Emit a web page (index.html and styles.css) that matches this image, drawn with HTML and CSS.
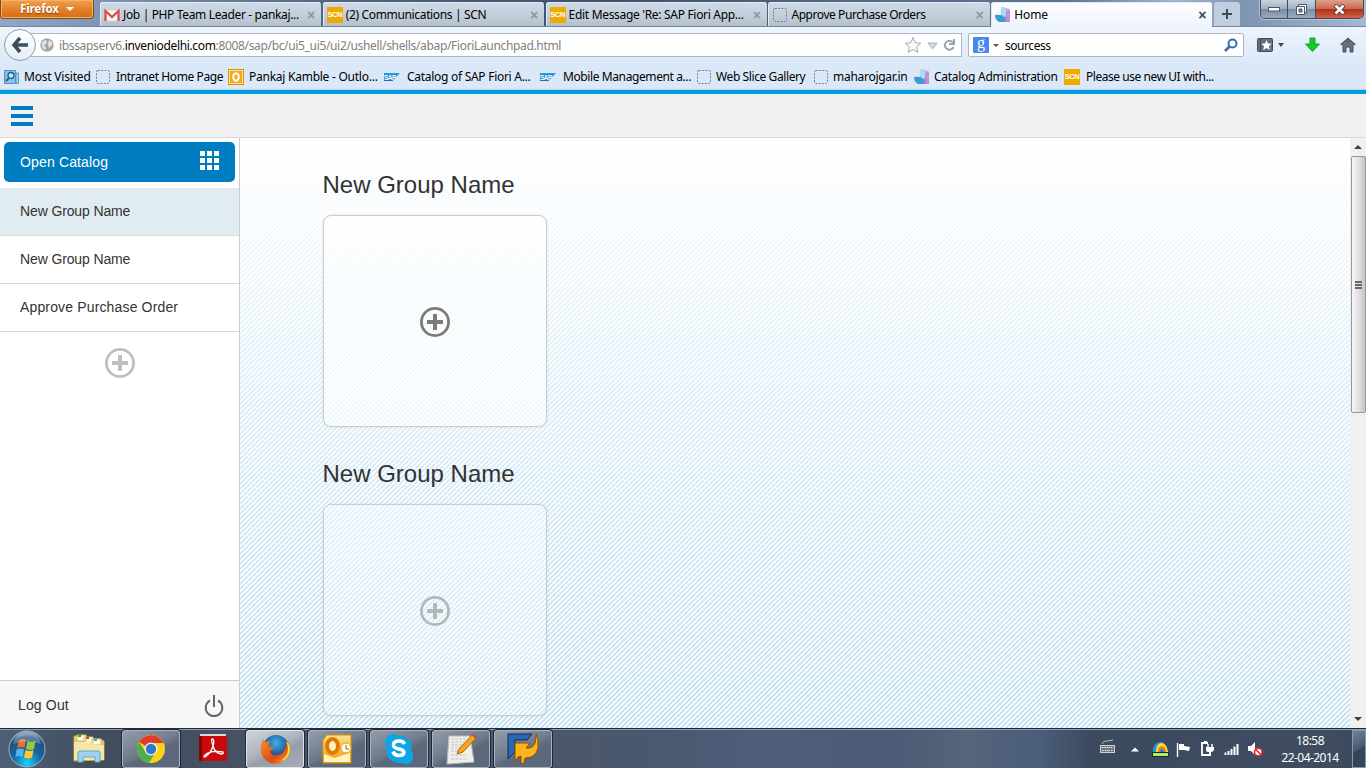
FILE: index.html
```html
<!DOCTYPE html>
<html lang="en">
<head>
<meta charset="utf-8">
<title>Home</title>
<link rel="stylesheet" href="styles.css">
</head>
<body>
<svg class="defs" width="0" height="0">
  <defs>
    <linearGradient id="petalA" x1="0" y1="1" x2="1" y2="0"><stop offset="0" stop-color="#3f8fd0"/><stop offset=".5" stop-color="#a58fd8"/><stop offset="1" stop-color="#e2c4ea"/></linearGradient>
    <linearGradient id="gold" x1="0" y1="0" x2="0" y2="1"><stop offset="0" stop-color="#ffe08a"/><stop offset="1" stop-color="#f0a000"/></linearGradient>
    <linearGradient id="sapBlue" x1="0" y1="0" x2="0" y2="1"><stop offset="0" stop-color="#19a5e0"/><stop offset="1" stop-color="#2464b4"/></linearGradient>
    <radialGradient id="orb" cx=".5" cy=".9" r=".9"><stop offset="0" stop-color="#19d4f8"/><stop offset=".45" stop-color="#1566a0"/><stop offset=".8" stop-color="#234f78"/><stop offset="1" stop-color="#a4bccb"/></radialGradient>
    <radialGradient id="globe" cx=".5" cy=".3" r=".7"><stop offset="0" stop-color="#3db2e8"/><stop offset="1" stop-color="#0b2a68"/></radialGradient>
    <linearGradient id="fox" x1="0" y1="0" x2="1" y2="1"><stop offset="0" stop-color="#f7931e"/><stop offset=".6" stop-color="#e0481a"/><stop offset="1" stop-color="#f8b020"/></linearGradient>
    <symbol id="petal" viewBox="0 0 16 16"><path d="M7 0l8 2v13H4l2-6z" fill="url(#petalA)"/><path d="M6.500 0q4 0 5 4t-3 7Q4 5 6.500 0z" fill="#a8dcf0"/><path d="M0 8q7-1 10 3l-1 4H4Q0 13 0 8z" fill="#3b9bd8"/><path d="M11 4q4-2 4 0v9l-3 2z" fill="#c48fd6"/></symbol>
    <symbol id="blank" viewBox="0 0 16 16"><rect x="1.500" y="1.500" width="13" height="13" rx="1.500" fill="none" stroke="#76808b" stroke-dasharray="2 1.3"/></symbol>
    <symbol id="sap" viewBox="0 0 16 8"><path d="M0 0h16L8.500 8H0z" fill="url(#sapBlue)"/><text x="0" y="6.500" font-size="6.500" font-weight="bold" fill="#fff" textLength="12">SAP</text></symbol>
    <symbol id="plus" viewBox="0 0 30 30"><circle cx="15" cy="15" r="13.600" fill="none" stroke="currentColor" stroke-width="2.800"/><path d="M15 7v16M7 15h16" fill="none" stroke="currentColor" stroke-width="4"/></symbol>
  </defs>
</svg>

<div class="titlebar">
  <div class="firefox">Firefox <i></i></div>
  <div class="tabs">
    <div class="tab">
      <svg class="ic" viewBox="0 0 16 16"><path d="M1 3h14v11H1z" fill="#f3f3f3" stroke="#ccc" stroke-width=".5"/><path d="M1.500 14V4L8 10l6.500-6v10" fill="none" stroke="#d54b3d" stroke-width="2.200"/></svg>
      <span class="t1">Job | PHP Team Leader - pankaj...</span><b class="x">×</b></div>
    <div class="tab"><div class="scn">SCN</div><span class="t2">(2) Communications | SCN</span><b class="x">×</b></div>
    <div class="tab"><div class="scn">SCN</div><span class="t3">Edit Message 'Re: SAP Fiori App...</span><b class="x">×</b></div>
    <div class="tab"><svg class="ic"><use href="#blank"/></svg><span class="t4">Approve Purchase Orders</span><b class="x">×</b></div>
    <div class="tab active"><svg class="ic"><use href="#petal"/></svg><span class="t5">Home</span><b class="x">×</b></div>
    <div class="newtab"><svg width="12" height="12"><path d="M6 1v10M1 6h10" stroke="#3d4a59" stroke-width="2"/></svg></div>
  </div>
  <div class="winctl">
    <div><svg width="12" height="6"><rect x=".5" y="1.500" width="11" height="3.500" fill="#fff" stroke="#4b5563"/></svg></div>
    <div><svg width="13" height="13"><path d="M3.500 1.500h8v8h-8z" fill="#fff" stroke="#4b5563"/><path d="M1.500 3.500h8v8h-8z" fill="#fff" stroke="#4b5563"/><path d="M4 6h3v3H4z" fill="#8090a4" stroke="#4b5563"/></svg></div>
    <div class="close"><svg width="13" height="11"><path d="M2 1l9 9M11 1L2 10" stroke="#58302c" stroke-width="4.200"/><path d="M2.500 1.500l8 8M10.500 1.500l-8 8" stroke="#fff" stroke-width="2.600"/></svg></div>
  </div>
</div>

<div class="navbar">
  <div class="back"><svg width="18" height="18" viewBox="0 0 18 18"><path d="M9 2L3 9l6 7M3 9h14" fill="none" stroke="#3f4c5c" stroke-width="3.500"/></svg></div>
  <div class="url">
    <svg class="world" viewBox="0 0 14 14"><circle cx="7" cy="7" r="6.700" fill="#a4a4a4"/><path d="M2 4q3-3 5-1l-1 3-2 1 2 3-1 2Q1 9 2 4zM9 2q4 2 3 5l-3 3-1-4z" fill="#e3e3e3"/></svg>
    <span class="addr">ibssapserv6.<em>inveniodelhi.com</em>:8008/sap/bc/ui5_ui5/ui2/ushell/shells/abap/FioriLaunchpad.html</span>
    <svg class="urlicons" viewBox="0 0 52 18"><path d="M9 1.500l2.200 5.200 5.600.5-4.200 3.700 1.300 5.500L9 13.500l-4.900 2.900 1.300-5.500L1.200 7.200l5.600-.5z" fill="#fafafa" stroke="#a5a9ad"/><path d="M24 7h9l-4.500 6z" fill="#d3d8df" stroke="#a8b0ba"/><path d="M49 6.500A4.500 4.500 0 1 0 49.500 11M50 3v5h-5" fill="none" stroke="#98a4b1" stroke-width="2"/></svg>
  </div>
  <div class="search">
    <div class="goog">g</div><i class="caret"></i><span class="q">sourcess</span>
    <svg width="14" height="14" viewBox="0 0 14 14"><circle cx="8.500" cy="5.500" r="4" fill="none" stroke="#3b6ea5" stroke-width="2"/><path d="M5.500 8.500L1 13" stroke="#3b6ea5" stroke-width="2.600"/></svg>
  </div>
  <svg class="bmk" width="28" height="15" viewBox="0 0 28 15"><rect x=".5" y=".5" width="15" height="13" rx="1" fill="#637180" stroke="#414d5b"/><path d="M3.500 1v12" stroke="#3d4957"/><path d="M9.500 2l1.500 3.500 3.700.3-2.800 2.500.9 3.700-3.300-2-3.300 2 .9-3.700-2.800-2.500 3.700-.3z" fill="#fff"/><path d="M21 5h6l-3 4z" fill="#3e4a58"/></svg>
  <svg class="dl" width="15" height="16"><path d="M5 1h5v6h4.500L7.500 14.500.5 7H5z" fill="#12c929" stroke="#10a724"/></svg>
  <svg class="home" width="16" height="16" viewBox="0 0 16 16"><path d="M1 8l7-6 7 6" fill="none" stroke="#4d5864" stroke-width="2.200"/><path d="M3 8.500L8 4l5 4.500V15h-3v-5H6v5H3z" fill="#65717d" stroke="#46515e"/></svg>
</div>

<div class="bookmarks">
  <div><svg class="ic" viewBox="0 0 16 16"><path d="M.5 1.500h11v13H.5z" fill="#8ac0e6" stroke="#4c8fc0"/><path d="M12 4h2.500v10.500H12z" fill="#a8d3ee" stroke="#5b9ac7"/><circle cx="7" cy="6.500" r="3" fill="#c5e3f6" stroke="#27608e" stroke-width="1.300"/><path d="M5 9l-3 3" stroke="#27608e" stroke-width="2"/></svg><span class="b1">Most Visited</span></div>
  <div><svg class="ic"><use href="#blank"/></svg><span class="b2">Intranet Home Page</span></div>
  <div><svg class="ic" viewBox="0 0 16 16"><rect x=".5" y=".5" width="15" height="15" fill="#fbe5a0" stroke="#d89000"/><path d="M2 2h12v12H2z" fill="#f2a91c"/><ellipse cx="8" cy="8" rx="2.800" ry="3.800" fill="none" stroke="#fff" stroke-width="2"/></svg><span class="b3">Pankaj Kamble - Outlo...</span></div>
  <div><svg class="sap"><use href="#sap"/></svg><span class="b4">Catalog of SAP Fiori A...</span></div>
  <div><svg class="sap"><use href="#sap"/></svg><span class="b5">Mobile Management a...</span></div>
  <div><svg class="ic"><use href="#blank"/></svg><span class="b6">Web Slice Gallery</span></div>
  <div><svg class="ic"><use href="#blank"/></svg><span class="b7">maharojgar.in</span></div>
  <div><svg class="ic"><use href="#petal"/></svg><span class="b8">Catalog Administration</span></div>
  <div><div class="scn">SCN</div><span class="b9">Please use new UI with...</span></div>
</div>

<div class="shellhead"><div class="burger"><i></i><i></i><i></i></div></div>

<div class="page">
  <div class="side">
    <div class="catalog"><span>Open Catalog</span><div class="dots"><i></i><i></i><i></i><i></i><i></i><i></i><i></i><i></i><i></i></div></div>
    <div class="group sel">New Group Name</div>
    <div class="group">New Group Name</div>
    <div class="group last">Approve Purchase Order</div>
    <div class="addgroup"><svg width="30" height="30"><use href="#plus"/></svg></div>
    <div class="logout"><span>Log Out</span><svg width="20" height="24" viewBox="0 0 20 24"><path d="M6 6.500a8.300 8.300 0 1 0 8 0M10 1v12" fill="none" stroke="#666" stroke-width="2"/></svg></div>
  </div>
  <div class="canvas">
    <h2>New Group Name</h2>
    <div class="tile first"><svg width="30" height="30"><use href="#plus"/></svg></div>
    <h2>New Group Name</h2>
    <div class="tile"><svg width="30" height="30"><use href="#plus"/></svg></div>
  </div>
  <div class="scroll"><div class="arrow up"></div><div class="thumb"><i></i><i></i><i></i></div><div class="arrow down"></div></div>
</div>

<div class="taskbar">
  <div class="start"><svg width="38" height="38" viewBox="0 0 38 38"><circle cx="19" cy="19" r="18" fill="url(#orb)" stroke="#9cb4c4"/><path d="M11 10q4-2 7 0l-1.500 8q-4-2-7.500 0z" fill="#ee6a2c"/><path d="M19.500 11q4 2 8 0l-1.500 8q-4 2-8 0z" fill="#96c93d"/><path d="M8.500 19.500q4-2 7.500 0l-1.500 7.500q-4-2-7 0z" fill="#56b4ec"/><path d="M17.500 20q4 2 8 0L24 27.500q-4 2-8 0z" fill="#fdca33"/><path d="M5 14Q7 3 19 3t14 11q-14-5-28 0z" fill="#fff" opacity=".25"/></svg></div>
  <div class="app bare"><svg width="34" height="32" viewBox="0 0 34 32"><path d="M2 3h10l2 3h14l4 2v19l-30 1z" fill="#e9cf7c" stroke="#c9a648"/><path d="M5 2h9v6H5zM12 4h9v6h-9zM20 6h9v6h-9z" fill="#fff9dd" stroke="#d6b85c"/><path d="M6 2h3v2H6z" fill="#13b31c"/><path d="M14 4h3v2h-3z" fill="#df4920"/><path d="M22 6h3v2h-3z" fill="#3aa0e8"/><path d="M2 9h17l3 3h10v15H2z" fill="#f5e6a6"/><path d="M6 29V20q0-2 2-2h18q2 0 2 2v9h-5v-5H11v5z" fill="#9ed4f0" stroke="#5aa6d2"/></svg></div>
  <div class="app"><svg width="30" height="30" viewBox="0 0 30 30"><circle cx="15" cy="15" r="14" fill="#fdd217"/><path d="M15 15L2.900 8A14 14 0 0 1 27.500 9H15z" fill="#df3a2e"/><path d="M2.900 8A14 14 0 0 0 13 28.900L19.500 18 9 17z" fill="#4bae4f"/><circle cx="15" cy="15" r="6.500" fill="#f4f4f4"/><circle cx="15" cy="15" r="5.200" fill="#2f78cc"/></svg></div>
  <div class="app bare acro"><svg width="30" height="30" viewBox="0 0 30 30"><path d="M1 2h28v26H1z" fill="#c80a0c"/><path d="M2 1h26v2H2z" fill="#d8d8d8"/><path d="M1 3h3v25H1z" fill="#850406"/><path d="M14 6q3 0 1 7T7 24q-2 0 0-2 6-5 18-3 1 2-2 2-6-1-8-8-2-6-1-7z" fill="none" stroke="#fff" stroke-width="1.300"/></svg></div>
  <div class="app lit"><svg width="31" height="31" viewBox="0 0 31 31"><circle cx="16" cy="14" r="13" fill="url(#globe)"/><path d="M27 6q5 8 1 16-5 8-14 8Q4 28 1 19 0 11 3 5l2 3 5-1-2 5 5 1q2 2-3 4 1 5 7 4 7 0 8-7 2-3 2-8z" fill="url(#fox)"/><path d="M26 7q4 9 0 15l-5 5q8-2 9-11 0-6-4-9z" fill="#fddb3a"/></svg></div>
  <div class="app"><svg width="30" height="30" viewBox="0 0 30 30"><path d="M5 1h24v28H1V6z" fill="url(#gold)" stroke="#d99400"/><path d="M2 20l10 4 16-5v9H2z" fill="#fff3c4"/><ellipse cx="10.500" cy="12" rx="5.500" ry="7" fill="#fff0c0" stroke="#df7808" stroke-width="4"/><circle cx="24" cy="14" r="5" fill="#fffbe8" stroke="#dda22e"/><path d="M24 11v4h3" fill="none" stroke="#8a6a20"/></svg></div>
  <div class="app"><svg width="30" height="30" viewBox="0 0 30 30"><path d="M8 0Q12-1 14 2q14 0 14 13-1 1-.5 2Q31 22 28 27t-11 2Q3 29 2 16q1-1 0-3Q-2 3 8 0z" fill="#0ea5e5"/><path d="M20.500 10Q19 6.500 14.500 7 9 7.500 9.500 11.500q.5 2.500 5.500 3.500t5 3.500q-.5 3-5 3-4.500 0-6-4" fill="none" stroke="#fff" stroke-width="3.600"/></svg></div>
  <div class="app"><svg width="31" height="31" viewBox="0 0 31 31"><path d="M3 2h21l4 26-27 2z" fill="#eeeeea" stroke="#bbb"/><path d="M5 5h15M5 8h13M5 11h12M5 14h10M5 17h7M5 21h15M5 25h17" stroke="#c4c4c4" stroke-dasharray="3 1"/><path d="M11 20l2-5L26 1l4 3-13 14z" fill="#f5a71d" stroke="#a86a10"/><path d="M26 1l2-1 3 3-1 2z" fill="#d44"/></svg></div>
  <div class="app"><svg width="32" height="32" viewBox="0 0 32 32"><path d="M1 1h24l-5 6H8v12l-7 7z" fill="#2b68b4" stroke="#0f2a58"/><path d="M8 10h15l-4 5q7 1 9-5 1-4 1-9 3 6 2 14-2 10-13 10l-1 5-3 1V23q-3 0-6 5z" fill="#ffb31a" stroke="#8a5200"/></svg></div>
  <div class="tray">
    <svg class="kb" width="15" height="15" viewBox="0 0 15 15"><path d="M2 5q1-3 4-3t7-1" fill="none" stroke="#c0bebc"/><rect x=".5" y="6.500" width="14" height="7" fill="#707780" stroke="#d4d0cd"/><path d="M2 8.500h11M2 11.500h2m1 0h5m1 0h2" stroke="#eee" stroke-dasharray="1.500 .7"/></svg>
    <svg class="tri" width="8" height="5"><path d="M0 4.500h8L4 .5z" fill="#fff"/></svg>
    <svg class="arc" width="17" height="16" viewBox="0 0 17 16"><path d="M1 11q0-10 8-10 4 0 7 10z" fill="#1e9bdb"/><path d="M4 11q0-9 6-9 5 1 6 9z" fill="#ffdc2c"/><path d="M6 11q0-6 4-6 4 1 4 6z" fill="#f07b22"/><path d="M8 11a2 3 0 0 1 4 0z" fill="#2580cc"/><path d="M.5 11.500h16v4H.5z" fill="#a5f56a" stroke="#222"/></svg>
    <svg class="flag" width="15" height="15" viewBox="0 0 15 15"><path d="M1.500 1v14" stroke="#fff" stroke-width="1.400"/><path d="M3 2h5v2l6 1-1 4-5-1H3z" fill="#fff"/></svg>
    <svg class="plug" width="14" height="16" viewBox="0 0 14 16"><path d="M8 2H2v12h8M4 1h3" fill="none" stroke="#fff" stroke-width="1.800"/><path d="M8 3v3M12 3v3" stroke="#fff" stroke-width="1.500"/><path d="M6 6h8v3q-1 2-3 2v4H9v-4Q6 11 6 9z" fill="#fff"/></svg>
    <svg class="bars" width="16" height="12"><path d="M1.500 12V9.500M4.500 12V8M7.500 12V6M10.500 12V3.500M13.500 12V1" stroke="#fff" stroke-width="2"/></svg>
    <svg class="vol" width="15" height="15" viewBox="0 0 15 15"><path d="M0 4h3l4-4v13L3 9H0z" fill="#fff"/><circle cx="10.300" cy="10" r="3.800" fill="#fff" stroke="#e3262c" stroke-width="1.600"/><path d="M7.800 7.500l5 5" stroke="#e3262c" stroke-width="1.600"/></svg>
    <div class="clock"><span>18:58</span><span>22-04-2014</span></div>
    <div class="peek"></div>
  </div>
</div>
</body>
</html>
```
FILE: styles.css
```css
* { box-sizing: border-box; }
body { margin: 0; width: 1366px; height: 768px; overflow: hidden; display: flex; flex-direction: column; font-family: "Noto Sans", "Open Sans", sans-serif; font-size: 12px; color: #000; white-space: nowrap; }
svg { display: block; flex: none; }
.defs { position: absolute; }
.ic { width: 16px; height: 16px; }
.sap { width: 16px; height: 8px; font-family: "Liberation Sans", sans-serif; }
.scn { width: 16px; height: 16px; flex: none; background: #edaa00; color: #fff; font: bold 7.500px/16px "Liberation Sans", sans-serif; text-align: center; letter-spacing: -.4px; }

/* window title and tabs */
.titlebar { height: 27px; flex: none; display: flex; background: linear-gradient(90deg, #8ea8c7, #7d94b1 8%, #50647f 25%, #3e506b 45%, #586d8a 65%, #607592 78%, #a1b6d0 86%, #7e94b0 91%, #a4b8d0); border-bottom: 1px solid #77869a; }
.firefox { width: 94px; height: 19px; margin-right: 6px; padding: 0 0 1px 19px; display: flex; align-items: center; gap: 7px; color: #fff; font-weight: bold; font-size: 11.500px; letter-spacing: -.1px; background: linear-gradient(#f0a14e, #e4812a 50%, #d66c0e); border: 1px solid #8c4a12; border-top: 0; border-radius: 0 0 4px 4px; box-shadow: inset 0 0 0 1px #f4b26e; text-shadow: 0 1px 1px #843d05; }
.firefox i, .caret { border: 4px solid transparent; border-top-color: currentColor; border-bottom: 0; }
.tabs { display: flex; gap: 1.500px; padding-top: 2px; width: 1142px; margin-right: 18px; }
.tab { width: 221.300px; height: 24px; padding: 1px 6px 0 4px; display: flex; align-items: center; gap: 3px; background: linear-gradient(#d0dae6, #c2cedb 60%, #b4bfcc); border-radius: 3px 3px 0 0; box-shadow: inset 1px 1px 0 #e2eaf3; }
.tab.active { height: 25px; padding-bottom: 1px; background: linear-gradient(#fff, #edf4fc); }
.tab span { letter-spacing: -.35px; }
.tab .t3 { letter-spacing: -.31px; }
.tab .t4 { letter-spacing: -.43px; }
.tab .t5 { letter-spacing: -.1px; }
.x { margin-left: auto; font: bold 14px/14px "Liberation Sans", sans-serif; color: #8c96a4; }
.active .x { color: #3e4650; }
.newtab { width: 26px; height: 24px; display: flex; align-items: center; justify-content: center; background: #c1cedd; border-radius: 3px 3px 0 0; }
.winctl { display: flex; width: 104px; height: 19px; border: 1px solid #404d5e; border-top: 0; border-radius: 0 0 5px 5px; overflow: hidden; box-shadow: 0 0 0 1px #b6c5d6; }
.winctl div { width: 28px; display: flex; align-items: center; justify-content: center; background: linear-gradient(#c8d3df, #a2b1c2 48%, #7a8ca3 52%, #98abc0); border-right: 1px solid #404d5e; }
.winctl div.close { width: 48px; background: linear-gradient(#dda08e, #cb6a54 48%, #b42f16 52%, #d0644a); border: 0; }

/* navigation */
.navbar { height: 36px; flex: none; display: flex; align-items: center; background: linear-gradient(#edf4fc, #dce9f8); }
.back { position: relative; z-index: 1; width: 32px; height: 32px; margin-left: 4px; display: flex; align-items: center; justify-content: center; border: 1px solid #8f9eb0; border-radius: 50%; background: linear-gradient(#fdfeff, #e6eef8); }
.url { width: 932px; height: 24px; margin-left: -6px; padding-left: 9px; display: flex; align-items: center; background: #fff; border: 1px solid #aab8ca; }
.world { width: 14px; height: 14px; margin-right: 5px; }
.addr { color: #808080; letter-spacing: -.34px; }
.addr em { color: #000; font-style: normal; }
.urlicons { width: 52px; height: 18px; margin-left: auto; margin-right: 5px; }
.search { width: 276px; height: 24px; margin-left: 6px; padding: 0 5px 0 4px; display: flex; align-items: center; background: #fff; border: 1px solid #aab8ca; border-radius: 2px; }
.goog { width: 16px; height: 16px; background: #4a86f0; color: #fff; font: 16px/12px "Liberation Serif", serif; text-align: center; border-radius: 1px; }
.caret { border-width: 3px; border-bottom: 0; color: #555; margin: 0 6px 0 4px; }
.q { letter-spacing: -.45px; }
.search svg { margin-left: auto; }
.bmk { margin-left: 13px; } .dl { margin-left: 20px; } .home { margin-left: 20px; }

.bookmarks { height: 27px; flex: none; padding: 1px 0 0 4px; display: grid; align-items: center; grid-template-columns: 91px 133px 156px 156px 156px 117px 101px 150px 250px; background: #dbe8f8; border-bottom: 1px solid #c5cfdd; }
.bookmarks > div { display: flex; align-items: center; gap: 4px; letter-spacing: -.28px; }
.bookmarks .sap { margin-right: 3px; }
.bookmarks .b1 { letter-spacing: -.2px; }
.bookmarks .b2, .bookmarks .b3 { margin-left: 1px; }
.bookmarks .b2, .bookmarks .b5, .bookmarks .b6 { letter-spacing: -.4px; }
.bookmarks .b3 { letter-spacing: -.25px; }
.bookmarks .b9 { letter-spacing: -.45px; margin-left: 2px; }

/* launchpad */
.shellhead { height: 48px; flex: none; background: #f1f1f1; border-top: 4px solid #009de0; border-bottom: 1px solid #d8d8d8; padding: 12px 11px; }
.burger { display: grid; gap: 4px; width: 22px; }
.burger i { height: 4px; background: #007cc0; }
.page { height: 590px; flex: none; display: flex; font-family: "Liberation Sans", Arial, sans-serif; color: #333; }
.side { width: 240px; display: flex; flex-direction: column; border-right: 1px solid #ccc; background: #fff; font-size: 14px; }
.catalog { height: 40px; margin: 4px 4px 6px; padding: 0 16px; display: flex; align-items: center; justify-content: space-between; background: #007cc0; color: #fff; border-radius: 5px; letter-spacing: .15px; }
.dots { display: grid; grid-template-columns: repeat(3, 5px); gap: 2px; margin-top: -3px; }
.dots i { height: 5px; background: #fff; }
.group { height: 48px; padding: 0 20px; line-height: 47px; border-bottom: 1px solid #d9d9d9; letter-spacing: -.13px; }
.group.last { letter-spacing: .15px; }
.group.sel { background: #e1ecf2; }
.addgroup { padding: 15.500px 0 0 104.500px; color: #bfbfbf; }
.logout { height: 48px; margin-top: auto; padding: 2px 15px 0 18px; display: flex; align-items: center; justify-content: space-between; background: #f7f7f7; border-top: 1px solid #ccc; letter-spacing: .15px; }
.logout span { margin-top: -2px; }
.canvas { width: 1110px; padding-left: 83px; background-image: linear-gradient(#fff, rgba(255,255,255,.45) 40%, rgba(255,255,255,0)), linear-gradient(135deg, #c9e4f4 25%, #fff 25% 50%, #c9e4f4 50% 75%, #fff 75%); background-size: 100% 100%, 5px 5px; }
.canvas h2 { margin: 0 0 0 -.5px; padding-top: 32px; height: 77px; line-height: 30px; font-size: 24px; font-weight: normal; }
.tile { width: 224px; height: 212px; display: flex; align-items: center; justify-content: center; border: 1px solid #ccc; border-radius: 8px; color: #b3b9bb; box-shadow: 0 0 3px rgba(0,0,0,.1); background: rgba(255,255,255,.3); }
.tile svg { margin-top: 2px; margin-right: 1px; }
.tile.first { color: #7b7b7b; background: rgba(255,255,255,.6); }
.scroll { width: 16px; display: flex; flex-direction: column; align-items: center; background: #f0f0f0; }
.arrow { width: 0; height: 4px; border: 4px solid transparent; }
.arrow.up { margin: 7px 0; border-top: 0; border-bottom-color: #404040; }
.arrow.down { margin: auto 0 7px; border-bottom: 0; border-top-color: #404040; }
.thumb { width: 15px; height: 257px; display: flex; flex-direction: column; align-items: center; justify-content: center; gap: 1px; border: 1px solid #979797; border-radius: 2px; background: linear-gradient(90deg, #f5f5f5, #e2e2e4 50%, #c4c4c8); }
.thumb i { width: 7px; height: 2px; background: #666; }

/* taskbar */
.taskbar { height: 40px; flex: none; display: flex; padding-top: 1px; border-top: 1px solid #1f2c3c; box-shadow: inset 0 1px #8b9bb0; background: linear-gradient(90deg, #4f6076, #414c5d 7%, #4c586c 30%, #4b586c 43%, #495770 47%, #4f5e79 56%, #4b5b75 65%, #56647c 71%, #4b5d79 76%, #3c4a60 80%, #3f4c60 98%, #35445a); }
.start { width: 58px; padding-left: 8px; }
.app { width: 58px; height: 38px; margin-left: 4px; display: flex; align-items: center; justify-content: center; border: 1px solid #aab2bf; border-radius: 3px; box-shadow: 0 0 0 1px #1e2937; background: linear-gradient(155deg, #949ca8, #727d8d 45%, #5d687a 60%, #5b677b); }
.app.bare { background: none; border-color: transparent; box-shadow: none; }
.acro svg { margin: -3px 0 0 0; }
.app.lit { background: linear-gradient(155deg, #d0d4da, #aeb4bd 45%, #979eab 60%, #a8afba); border-color: #e1e5ea; }
.start + .app { margin-left: 2px; }
.tray { margin-left: auto; display: flex; align-items: center; color: #fff; }
.tri { margin-left: 16px; } .arc { margin-left: 13px; } .flag { margin-left: 7px; } .plug { margin-left: 9px; } .bars { margin-left: 10px; } .vol { margin-left: 8px; }
.kb { margin-top: -6px; }
.clock { width: 60px; margin: 0 12px 0 17px; display: grid; justify-items: center; line-height: 17px; letter-spacing: -.55px; }
.peek { width: 14px; height: 38px; border: 1px solid #8997a8; background: linear-gradient(150deg, #74839a, #46566d 50%, #35455b 51%); }
```
